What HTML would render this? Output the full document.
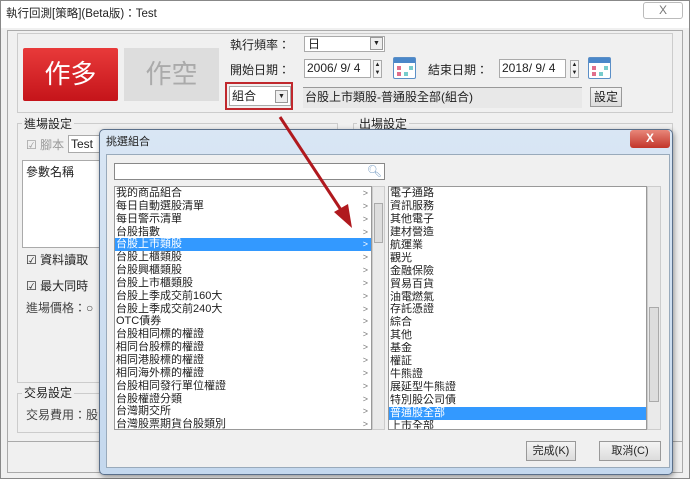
<!DOCTYPE html>
<html><head><meta charset="utf-8"><style>
*{box-sizing:border-box;margin:0;padding:0}
body{width:690px;height:479px;overflow:hidden;background:#fff;font-family:"Liberation Sans","Noto Sans CJK TC",sans-serif;font-size:12px;color:#222;position:relative}
.a{position:absolute}
.t{position:absolute;white-space:nowrap;line-height:14px}
.inp{position:absolute;background:#fff;border:1px solid #aaa}
.btn{position:absolute;border:1px solid #999;background:linear-gradient(#f4f4f4,#dcdcdc);text-align:center;font-size:12px}
.dd{position:absolute;width:13px;height:13px;border:1px solid #999;background:#eee;font-size:7px;text-align:center;line-height:11px}
.cal{position:absolute;width:23px;height:22px;border:1px solid #5b8fc7;border-radius:2px;background:linear-gradient(#4a87c9 0 5px,#fff 5px);}
.cal i{position:absolute;width:4px;height:4px;background:#e06f8c}
.grp{position:absolute;border:1px solid #ccc}
.lst,.rl{font-size:11px}
.lst div{height:12.85px;line-height:12.85px;padding-left:1px;position:relative;white-space:nowrap;overflow:hidden}
.lst div span{position:absolute;right:3px;top:0;color:#777;font-size:9px}
.rl div{height:12.95px;line-height:12.95px;padding-left:1px;white-space:nowrap;overflow:hidden}
.sel{background:#3399ff;color:#fff}
</style></head><body>
<div class="a" style="left:0;top:0;width:690px;height:479px;background:#f0f0f0;border:1px solid #888"></div>
<div class="a" style="left:1px;top:1px;width:688px;height:27px;background:#fff"></div>
<div class="t" style="left:6px;top:7px;font-size:11.5px">執行回測[策略](Beta版)：Test</div>
<div class="a" style="left:643px;top:2px;width:40px;height:17px;border:1px solid #bbb;border-radius:3px;background:#fff;text-align:center;font-size:12px;line-height:15px;color:#777">X</div>
<div class="a" style="left:7px;top:30px;width:676px;height:443px;border:1px solid #aaa"></div>
<div class="grp" style="left:17px;top:33px;width:656px;height:80px"></div>
<div class="a" style="left:23px;top:48px;width:95px;height:53px;background:linear-gradient(#e83a3a,#c5141a);border-radius:2px;color:#fff;font-size:26px;text-align:center;line-height:53px">作多</div>
<div class="a" style="left:124px;top:48px;width:95px;height:53px;background:#ddd;color:#aaa;font-size:26px;text-align:center;line-height:53px">作空</div>
<div class="t" style="left:230px;top:38px">執行頻率：</div>
<div class="inp" style="left:304px;top:36px;width:81px;height:16px;padding-left:3px;line-height:14px">日<div class="dd" style="right:1px;top:0">▼</div></div>
<div class="t" style="left:230px;top:63px">開始日期：</div>
<div class="inp" style="left:304px;top:59px;width:67px;height:19px;padding-left:2px;line-height:17px">2006/ 9/ 4</div>
<div class="a" style="left:373px;top:60px;width:9px;height:18px;border:1px solid #aaa;font-size:6px;text-align:center;line-height:8px;background:#f4f4f4">▲<br>▼</div>
<div class="cal" style="left:393px;top:57px"><i style="left:3px;top:8px"></i><i style="left:3px;top:14px"></i><i style="left:10px;top:14px;background:#7cc"></i><i style="left:15px;top:8px;background:#7cc"></i></div>
<div class="t" style="left:428px;top:63px">結束日期：</div>
<div class="inp" style="left:499px;top:59px;width:67px;height:19px;padding-left:2px;line-height:17px">2018/ 9/ 4</div>
<div class="a" style="left:570px;top:60px;width:9px;height:18px;border:1px solid #aaa;font-size:6px;text-align:center;line-height:8px;background:#f4f4f4">▲<br>▼</div>
<div class="cal" style="left:588px;top:57px"><i style="left:3px;top:8px"></i><i style="left:3px;top:14px"></i><i style="left:10px;top:14px;background:#7cc"></i><i style="left:15px;top:8px;background:#7cc"></i></div>
<div class="a" style="left:225px;top:82px;width:68px;height:28px;border:2px solid #c0282d"></div>
<div class="inp" style="left:229px;top:86px;width:62px;height:20px;padding-left:2px;line-height:18px">組合<div class="dd" style="right:2px;top:3px">▼</div></div>
<div class="a" style="left:303px;top:87px;width:279px;height:21px;background:#e8e8e8;border-top:1px solid #999;padding-left:2px;line-height:19px">台股上市類股-普通股全部(組合)</div>
<div class="btn" style="left:590px;top:87px;width:32px;height:20px;line-height:18px">設定</div>
<div class="grp" style="left:17px;top:123px;width:321px;height:260px"></div>
<div class="t" style="left:22px;top:117px;background:#f0f0f0;padding:0 2px">進場設定</div>
<div class="grp" style="left:353px;top:123px;width:320px;height:260px"></div>
<div class="t" style="left:357px;top:117px;background:#f0f0f0;padding:0 2px">出場設定</div>
<div class="t" style="left:26px;top:138px;color:#999">☑ 腳本</div>
<div class="inp" style="left:68px;top:135px;width:40px;height:18px;padding-left:2px;line-height:16px">Test</div>
<div class="inp" style="left:22px;top:160px;width:80px;height:88px;padding:2px 3px">參數名稱</div>
<div class="t" style="left:26px;top:253px">☑ 資料讀取</div>
<div class="t" style="left:26px;top:279px">☑ 最大同時</div>
<div class="t" style="left:26px;top:301px;color:#444">進場價格：○</div>
<div class="grp" style="left:17px;top:393px;width:90px;height:40px"></div>
<div class="t" style="left:22px;top:386px;background:#f0f0f0;padding:0 2px">交易設定</div>
<div class="t" style="left:26px;top:408px;color:#444">交易費用：股</div>
<div class="a" style="left:7px;top:441px;width:676px;height:1px;background:#aaa"></div>
<div class="a" style="left:99px;top:129px;width:574px;height:346px;background:linear-gradient(#d9e6f4,#c4d8ee);border:1px solid #5a6f8a;border-radius:5px;box-shadow:1px 2px 6px rgba(0,0,0,.4)"></div>
<div class="t" style="left:106px;top:135px;font-size:11px">挑選組合</div>
<div class="a" style="left:630px;top:130px;width:40px;height:18px;background:linear-gradient(#e8877a,#c2352a);border-radius:3px;color:#fff;font-weight:bold;text-align:center;line-height:17px;font-size:12px">X</div>
<div class="a" style="left:106px;top:154px;width:564px;height:314px;background:#f0f0f0;border:1px solid #9ab"></div>
<div class="inp" style="left:114px;top:163px;width:271px;height:17px;border-color:#888"><span style="position:absolute;right:2px;top:0;color:#7a9fc5;font-size:12px">🔍︎</span></div>
<div class="inp lst" style="left:114px;top:186px;width:258px;height:244px;border-color:#999;overflow:hidden">
<div>我的商品組合<span>&gt;</span></div><div>每日自動選股清單<span>&gt;</span></div><div>每日警示清單<span>&gt;</span></div><div>台股指數<span>&gt;</span></div><div class="sel">台股上市類股<span style="color:#fff">&gt;</span></div><div>台股上櫃類股<span>&gt;</span></div><div>台股興櫃類股<span>&gt;</span></div><div>台股上市櫃類股<span>&gt;</span></div><div>台股上季成交前160大<span>&gt;</span></div><div>台股上季成交前240大<span>&gt;</span></div><div>OTC債券<span>&gt;</span></div><div>台股相同標的權證<span>&gt;</span></div><div>相同台股標的權證<span>&gt;</span></div><div>相同港股標的權證<span>&gt;</span></div><div>相同海外標的權證<span>&gt;</span></div><div>台股相同發行單位權證<span>&gt;</span></div><div>台股權證分類<span>&gt;</span></div><div>台灣期交所<span>&gt;</span></div><div>台灣股票期貨台股類別<span>&gt;</span></div>
</div>
<div class="a" style="left:372px;top:186px;width:13px;height:244px;background:#eaeaea;border:1px solid #ccc"><div class="a" style="left:1px;top:16px;width:9px;height:40px;background:#ddd;border:1px solid #aaa"></div></div>
<div class="inp rl" style="left:388px;top:186px;width:259px;height:244px;border-color:#999;overflow:hidden">
<div>電子通路</div><div>資訊服務</div><div>其他電子</div><div>建材營造</div><div>航運業</div><div>觀光</div><div>金融保險</div><div>貿易百貨</div><div>油電燃氣</div><div>存託憑證</div><div>綜合</div><div>其他</div><div>基金</div><div>權証</div><div>牛熊證</div><div>展延型牛熊證</div><div>特別股公司債</div><div class="sel">普通股全部</div><div>上市全部</div>
</div>
<div class="a" style="left:647px;top:186px;width:14px;height:244px;background:#eaeaea;border:1px solid #ccc"><div class="a" style="left:1px;top:120px;width:10px;height:95px;background:#ddd;border:1px solid #aaa"></div></div>
<div class="btn" style="left:526px;top:441px;width:50px;height:20px;line-height:18px;font-size:11px">完成(K)</div>
<div class="btn" style="left:599px;top:441px;width:62px;height:20px;line-height:18px;font-size:11px">取消(C)</div>
<svg class="a" style="left:0;top:0" width="690" height="479"><line x1="280" y1="117" x2="343" y2="213" stroke="#b0191e" stroke-width="3"/><polygon points="352,228 334,212 348,204" fill="#b0191e"/></svg>
</body></html>
